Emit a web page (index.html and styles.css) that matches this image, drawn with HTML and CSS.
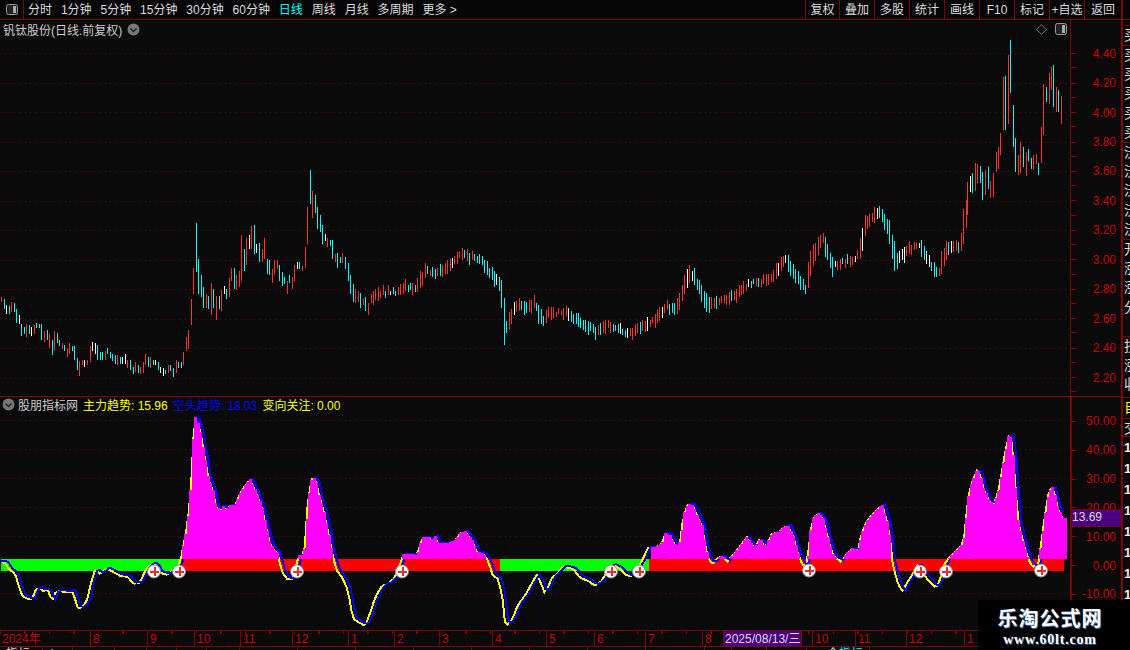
FILE: index.html
```html
<!DOCTYPE html>
<html lang="zh">
<head>
<meta charset="utf-8">
<title>钒钛股份</title>
<link rel="stylesheet" href="styles.css">
</head>
<body>
<div class="app">
  <header class="toolbar">
    <button class="layout-btn" aria-label="切换布局">
      <svg width="12" height="11" viewBox="0 0 12 11"><rect x="0.5" y="0.5" width="11" height="10" rx="2" fill="#222" stroke="#999"/><rect x="7" y="2" width="3" height="7" fill="#aaa"/></svg>
    </button>
    <nav class="periods">
      <span>分时</span><span>1分钟</span><span>5分钟</span><span>15分钟</span><span>30分钟</span><span>60分钟</span><span class="active">日线</span><span>周线</span><span>月线</span><span>多周期</span><span>更多 &gt;</span>
    </nav>
    <div class="tools">
      <span class="tool tool-first">复权</span><span class="tool">叠加</span><span class="tool">多股</span><span class="tool">统计</span><span class="tool">画线</span><span class="tool">F10</span><span class="tool">标记</span><span class="tool">+自选</span><span class="tool">返回</span><span class="tool tool-end"></span>
    </div>
  </header>

  <div class="body-row">
    <main class="charts">
      <section class="panel panel-price">
        <div class="plot">
          <svg id="price" class="plot-svg" width="1070" height="376" viewBox="0 20 1070 376"></svg>
          <div class="title-line">
            <span class="title-text">钒钛股份(日线.前复权)</span>
            <svg class="chev" width="13" height="13" viewBox="0 0 13 13"><circle cx="6.5" cy="6.5" r="6" fill="#777"/><path d="M3.5 5.5l3 3 3-3" fill="none" stroke="#222" stroke-width="1.4"/></svg>
          </div>
          <div class="corner-icons">
            <svg width="11" height="11" viewBox="0 0 11 11"><path d="M5.5 0.7l4.8 4.8-4.8 4.8-4.8-4.8z" fill="none" stroke="#777"/></svg>
            <svg width="12" height="12" viewBox="0 0 12 12"><rect x="0.5" y="0.5" width="11" height="11" rx="2" fill="#222" stroke="#999"/><rect x="7" y="2" width="3" height="8" fill="#aaa"/></svg>
          </div>
        </div>
        <div class="axis axis-price">
          <div class="mark">4.40</div><div class="mark">4.20</div><div class="mark">4.00</div><div class="mark">3.80</div><div class="mark">3.60</div><div class="mark">3.40</div><div class="mark">3.20</div><div class="mark">3.00</div><div class="mark">2.80</div><div class="mark">2.60</div><div class="mark">2.40</div><div class="mark">2.20</div>
        </div>
      </section>

      <section class="panel panel-ind">
        <div class="plot">
          <svg id="indicator" class="plot-svg" width="1070" height="233" viewBox="0 397 1070 233"></svg>
          <div class="ind-legend">
            <svg class="chev" width="13" height="13" viewBox="0 0 13 13"><circle cx="6.5" cy="6.5" r="6" fill="#777"/><path d="M3.5 5.5l3 3 3-3" fill="none" stroke="#222" stroke-width="1.4"/></svg>
            <span class="ind-name">股朋指标网</span>
            <span class="yellow">主力趋势: 15.96</span>
            <span class="blue">空头趋势: 18.03</span>
            <span class="yellow">变向关注: 0.00</span>
          </div>
        </div>
        <div class="axis axis-ind">
          <div class="mark">50.00</div><div class="mark">40.00</div><div class="mark">30.00</div><div class="mark">20.00</div><div class="mark">10.00</div><div class="mark">0.00</div><div class="mark">-10.00</div>
          <div class="value-tag">13.69</div>
        </div>
      </section>

      <div class="time-axis">
        <span>2024年</span><span>8</span><span>9</span><span>10</span><span>11</span><span>12</span><span>1</span><span>2</span><span>3</span><span>4</span><span>5</span><span>6</span><span>7</span><span>8</span><span class="date-tag">2025/08/13/三</span><span class="gap"></span><span>10</span><span>11</span><span>12</span><span>1</span>
      </div>
      <div class="tabs">
        <span>指标</span><span>(</span><span></span><span></span><span></span><span></span><span></span><span></span><span></span><span></span><span></span><span></span><span></span><span></span><span></span><span></span><span></span><span></span><span class="tab-wide">全<b class="tab-on">指标</b></span><span></span>
      </div>
    </main>

    <aside class="strip">
      <div class="strip-price">
        <div class="sgroup g1"><span>买</span></div>
        <div class="sgroup g2"><span>买</span><span>买</span><span>买</span><span>买</span><span>买</span></div>
        <div class="sgroup g2"><span>沃</span><span>沃</span><span>沃</span><span>沃</span><span>沃</span></div>
        <div class="sgroup g2"><span>开</span><span>涨</span><span>涨</span><span>分</span></div>
        <div class="sgroup g3"><span>技</span><span>涨</span><span>收</span></div>
      </div>
      <div class="strip-ind">
        <div class="sgroup g4"><span class="yellow">自</span></div>
        <div class="sgroup g5"><span>交</span></div>
        <div class="digits"><span>1</span><span>1</span><span>1</span><span>1</span><span>1</span><span>1</span><span>1</span><span>1</span></div>
      </div>
    </aside>
  </div>

  <div class="watermark">
    <div class="wm-title">乐淘公式网</div>
    <div class="wm-url">www.60lt.com</div>
  </div>
</div>
<script src="chart.js"></script>
</body>
</html>
```

FILE: styles.css
```css
* { box-sizing: border-box; }
html, body { margin: 0; padding: 0; background: #0a0a0a; }
body {
  width: 1130px;
  height: 650px;
  overflow: hidden;
  font-family: "Liberation Sans", "Noto Sans CJK SC", sans-serif;
  font-size: 12px;
  color: #ddd;
}
.app { position: relative; width: 1130px; height: 650px; display: flex; flex-direction: column; }

/* toolbar */
.toolbar {
  flex: none;
  height: 20px;
  display: flex;
  background: #050505;
  border-bottom: 1px solid #800000;
}
.layout-btn {
  width: 24px;
  padding: 0 0 0 1px;
  background: none;
  border: 0;
  border-right: 1px solid #800000;
  display: flex;
  align-items: center;
  justify-content: center;
}
.periods { display: flex; align-items: center; gap: 8.9px; padding: 1px 0 0 4px; flex: 1; line-height: 18px; }
.periods .active { color: #00ffff; }
.tools { display: flex; }
.tool {
  width: 35px;
  border-left: 1px solid #800000;
  text-align: center;
  line-height: 20px;
  white-space: nowrap;
}
.tool-first { width: 34px; }
.tool-end { width: 9px; border-left-width: 2px; }
.tools .tool:nth-last-child(2) { width: 37px; }

/* layout */
.body-row { flex: 1; display: flex; min-height: 0; }
.charts { width: 1121px; flex: none; display: flex; flex-direction: column; }
.panel { display: flex; flex: none; }
.panel-price { height: 377px; border-bottom: 1px solid #800000; }
.panel-ind { height: 233px; }
.plot { position: relative; width: 1070px; flex: none; }
.plot-svg { display: block; }
.title-line {
  position: absolute;
  left: 3px;
  top: 0;
  display: flex;
  align-items: center;
  gap: 5px;
  height: 18px;
  color: #ccc;
  white-space: nowrap;
}
.corner-icons {
  position: absolute;
  right: 3px;
  top: 3px;
  display: flex;
  align-items: center;
  gap: 8px;
}
.ind-legend {
  position: absolute;
  left: 2px;
  top: -1px;
  height: 17px;
  display: flex;
  align-items: center;
  gap: 5px;
  white-space: nowrap;
}
.ind-legend .chev { margin-right: -2px; }
.ind-name { color: #ccc; }
.yellow { color: #ffff00; }
.blue { color: #0000ff; }

/* axis */
.axis { position: relative; flex: 1; color: #c80000; text-align: right; }
.axis-price { border-left: 1px solid #800000; padding-top: 19px; }
.axis-ind { border-left: 2px solid #800000; padding-top: 10px; }
.mark { padding-right: 5px; display: flex; align-items: center; justify-content: flex-end; }
.axis-price .mark {
  height: 29.45px;
  background:
    linear-gradient(#800000, #800000) left center / 6px 1px no-repeat,
    linear-gradient(#800000, #800000) left bottom / 6px 1px no-repeat;
}
.axis-ind .mark {
  height: 28.85px;
  background: linear-gradient(#800000, #800000) left center / 5px 1px no-repeat;
}
.value-tag {
  position: absolute;
  left: 0;
  top: 112px;
  width: 49px;
  height: 18px;
  background: #4b0082;
  border-top: 1px solid #800000;
  border-bottom: 1px solid #800000;
  color: #ddd;
  text-align: left;
  line-height: 15px;
}

/* time axis */
.time-axis {
  flex: none;
  height: 17px;
  width: 1121px;
  display: grid;
  grid-template-columns: 91px 57px 47px 46px 52px 56px 46px 45px 53px 54px 48px 51px 57px 21px 78px 11px 43px 51px 58px 1fr;
  border-top: 1px solid #800000;
  border-bottom: 1px solid #800000;
  color: #c80000;
  line-height: 16px;
  background:
    repeating-linear-gradient(90deg, #800000 0 1px, transparent 1px 24.5px) left top / 100% 3px no-repeat;
}
.time-axis span { border-right: 1px solid #800000; padding-left: 2px; white-space: nowrap; overflow: hidden; }
.time-axis .date-tag { background: #4b0082; color: #ddd; padding-left: 1px; }
.time-axis .gap { padding: 0; }

/* clipped bottom tabs */
.tabs {
  flex: none;
  height: 3px;
  overflow: hidden;
  display: grid;
  grid-template-columns: 43px 30px 42px 32px 30px 30px 33px 58px 58px 58px 58px 58px 58px 58px 59px 27px 35px 40px 63px 1fr;
  line-height: 15px;
  color: #ddd;
}
.tabs span { border-right: 1px solid #800000; padding-left: 6px; white-space: nowrap; }
.tabs .tab-wide { padding-left: 20px; }
.tabs .tab-on { color: #00ffff; font-weight: 400; }

/* clipped right strip */
.strip {
  width: 9px;
  flex: none;
  border-left: 2px solid #800000;
  overflow: hidden;
  color: #ddd;
}
.strip-price { height: 377px; padding-top: 5px; }
.sgroup { border-top: 1px solid #800000; padding-left: 1px; white-space: nowrap; }
.sgroup span { display: block; font-size: 14px; line-height: 19.2px; height: 19.2px; }
.g1 { height: 20px; }
.g2 { height: 97px; }
.g3 { height: 61px; }
.g4 { height: 21px; }
.g5 { height: 19px; border-bottom: 1px solid #800000; }
.digits { display: flex; flex-direction: column; padding-left: 1px; }
.digits span { height: 21px; line-height: 21px; font-size: 13px; font-weight: 700; color: #eee; }

/* watermark */
.watermark {
  position: absolute;
  left: 978px;
  top: 600px;
  width: 152px;
  height: 50px;
  background: #000;
  color: #fff;
  text-align: center;
  padding-right: 8px;
}
.wm-title {
  font-size: 20px;
  font-weight: 700;
  line-height: 28px;
  letter-spacing: 1px;
  padding-top: 5px;
  height: 32px;
  text-shadow: 1px 1px 0 #4a6fb0;
}
.wm-url {
  font-family: "Liberation Serif", serif;
  font-weight: 700;
  font-size: 14px;
  line-height: 16px;
  letter-spacing: 0.8px;
  text-shadow: 1px 1px 0 #2f4f90;
}
```

FILE: chart.js
```js
(function () {
  var NS = 'http://www.w3.org/2000/svg';
  var COLORS = { r: '#ff3232', c: '#00ffff', w: '#ffffff' };
  var STEP = 2.47;

  function add(parent, name, attrs) {
    var el = document.createElementNS(NS, name);
    for (var k in attrs) el.setAttribute(k, attrs[k]);
    parent.appendChild(el);
    return el;
  }
  function grid(svg, ys) {
    ys.forEach(function (y) {
      add(svg, 'line', { x1: 0, x2: 1070, y1: y + 0.5, y2: y + 0.5, stroke: '#640000', 'stroke-dasharray': '1 4', 'shape-rendering': 'crispEdges' });
    });
  }
  function interp(pts, x) {
    if (x <= pts[0][0]) return pts[0][1];
    for (var i = 1; i < pts.length; i++) {
      if (x <= pts[i][0]) {
        var a = pts[i - 1], b = pts[i];
        return a[1] + (b[1] - a[1]) * (x - a[0]) / (b[0] - a[0]);
      }
    }
    return pts[pts.length - 1][1];
  }

  /* ---------- price panel ---------- */
  var head = 'r1,297,302 c4,299,309 w6,305,314 c9,306,314 r11,302,312 c14,303,312 c16,309,323 w19,315,324 c21,324,336 c24,327,334 r26,324,337 c29,325,334 w31,327,336 r34,325,334 c36,323,328 c39,324,328 c41,324,340 r44,331,342 c47,330,340 r49,334,348 c52,340,355 r54,331,351 c57,333,343 c59,340,346 r62,343,349 c64,345,351 r67,348,357 r69,343,354 c72,346,351 c74,346,360 c77,358,370 r79,361,376 r82,360,365 w84,360,367 r87,360,365 r90,346,362 w92,342,351 w95,343,354 c97,345,360 c100,352,360 c102,352,360 r105,351,360 c107,348,354 c110,352,358 c112,354,361 c115,355,364 r117,355,365 c120,357,364 w122,357,364 w125,354,364 r127,360,368 c130,360,370 c133,367,374 r135,362,372 c138,365,373 r140,367,374 r143,362,373 r145,354,365 c148,357,367 r150,357,368 c153,360,365 w155,360,365 c158,362,370 w160,367,373 w163,368,376 c165,370,374 r168,365,373 c170,365,371 c173,368,377 r176,360,373 c178,362,368 c181,362,368 r183,352,365 r186,337,351 r188,330,349 r191,299,325 r193,268,294 c196,223,272 c198,259,294 c201,275,297 c203,287,308 r206,294,308 c208,296,309 r211,283,315 c213,289,308 r216,296,320 c219,296,309 r221,290,311 w224,286,294 c226,289,299 r229,278,297 r231,268,281 c234,268,289 r236,275,290 r239,271,287 r241,235,281 c244,249,271 r246,238,265 w249,235,249 r251,226,249 c254,225,254 w256,244,253 c259,243,262 r262,249,262 r264,238,259 c267,259,274 c269,260,275 r272,269,283 r274,260,274 r277,260,269 c279,265,281 c282,272,286 c284,277,284 r287,281,294 c289,275,283 r292,277,289 r294,265,281 w297,262,269 c299,262,269 r302,266,271 r305,247,268 r307,207,244 c310,170,204 r312,191,218 c315,195,213 c317,207,229 c320,215,232 c322,225,244 w325,234,241 r327,238,247 c330,240,246 c332,240,259 r335,254,262 c337,253,268 c340,257,263 r342,253,263 c345,257,269 c348,263,281 c350,275,294 c353,284,302 r355,289,303 r358,291,302 c360,293,308 r363,299,305 c365,297,311 r368,303,315';
  var tail = 'r967,182,215 w970,176,192 c972,173,193 r975,163,191 r977,164,183 c980,166,183 c982,172,200 r985,170,195 c988,167,189 r990,181,198 r993,173,197 r996,152,172 r998,147,169 r1000,133,155 r1003,77,130 c1005,76,130 r1008,55,124 c1010,40,93 c1013,105,147 c1015,138,172 r1018,155,175 r1020,142,173 c1023,147,167 r1026,152,176 c1028,149,161 c1031,158,169 r1033,155,170 r1036,154,164 c1038,163,175 r1041,127,163 r1043,84,135 c1046,87,102 r1049,73,104 r1051,67,90 c1053,65,107 r1056,87,112 c1058,90,112 r1061,96,124';

  var mid = [[370,300],[380,292],[395,293],[405,285],[415,290],[425,272],[440,272],[450,262],[462,255],[475,258],[485,265],[497,282],[501,290],[503,320],[507,326],[512,312],[518,302],[525,308],[535,302],[542,322],[550,312],[565,312],[580,322],[595,332],[610,325],[628,335],[640,328],[655,320],[667,305],[675,312],[685,285],[690,272],[698,285],[708,305],[720,302],[735,295],[745,285],[760,282],[770,278],[785,258],[795,275],[805,290],[812,255],[822,238],[832,265],[845,262],[858,255],[865,225],[878,210],[888,228],[895,262],[905,252],[918,245],[928,262],[938,272],[945,250],[960,245],[965,215]];

  var seed = 20250813;
  function rnd() {
    seed = (seed * 1664525 + 1013904223) % 4294967296;
    return seed / 4294967296;
  }
  function parse(s) {
    return s.split(' ').map(function (t) {
      var p = t.slice(1).split(',').map(Number);
      return { c: t.charAt(0), x: p[0], t: p[1], b: p[2] };
    });
  }
  function middleBars() {
    var bars = [];
    for (var x = 370.5; x < 966; x += STEP) {
      var y = interp(mid, x), prev = interp(mid, x - STEP);
      var slope = Math.abs(y - prev);
      var half = 2 + rnd() * 4 + slope * 0.8;
      var wob = (rnd() - 0.5) * 5;
      var up = (y - prev) + (rnd() - 0.5) * 3.2 < 0;
      var r = rnd();
      bars.push({ c: r < 0.08 ? 'w' : up ? 'r' : 'c', x: Math.round(x), t: Math.round(y + wob - half), b: Math.round(y + wob + half) });
    }
    return bars;
  }

  var price = document.getElementById('price');
  grid(price, [53, 83, 112, 142, 171, 201, 230, 260, 289, 319, 348, 378]);
  parse(head).concat(middleBars(), parse(tail)).forEach(function (b) {
    add(price, 'rect', { x: b.x, y: b.t, width: 1, height: b.b - b.t, fill: COLORS[b.c], 'shape-rendering': 'crispEdges' });
  });

  /* ---------- indicator panel ---------- */
  var line = [[0,560],[5,562],[10,570],[15,572],[18,583],[22,595],[27,598],[32,599],[35,590],[39,587],[43,590],[48,589],[52,601],[55,592],[60,590],[67,592],[72,590],[75,598],[78,608],[83,606],[87,600],[91,582],[95,569],[100,573],[107,568],[113,571],[120,575],[128,576],[133,583],[140,582],[145,570],[150,564],[155,563],[160,572],[167,574],[173,570],[180,563],[183,547],[186,532],[189,510],[192,472],[193,440],[195,416],[198,423],[202,438],[203,447],[205,457],[208,477],[213,490],[216,507],[220,510],[223,506],[226,510],[230,505],[235,505],[240,493],[245,485],[250,479],[253,485],[258,497],[262,507],[269,540],[273,548],[278,553],[280,563],[283,573],[288,579],[293,578],[297,563],[298,555],[303,555],[306,540],[307,510],[310,487],[312,478],[316,478],[318,492],[323,507],[330,540],[333,557],[337,570],[343,578],[348,590],[353,618],[358,621],[365,625],[370,613],[375,597],[382,585],[388,583],[395,577],[402,558],[403,554],[410,554],[417,555],[422,537],[428,537],[432,540],[435,536],[438,543],[447,543],[455,540],[460,533],[465,531],[472,540],[477,552],[483,553],[488,560],[493,575],[498,578],[502,593],[505,622],[508,624],[513,617],[518,604],[525,595],[532,582],[537,574],[542,585],[545,593],[552,577],[557,573],[563,566],[573,568],[580,577],[588,580],[595,585],[602,580],[607,570],[612,564],[620,568],[627,575],[633,575],[642,560],[648,547],[655,547],[662,543],[665,533],[670,535],[675,545],[679,545],[682,532],[683,517],[688,503],[693,505],[698,517],[702,525],[705,543],[708,558],[713,563],[718,557],[723,556],[727,561],[735,552],[742,543],[747,536],[750,542],[755,547],[760,538],[765,547],[772,533],[778,532],[783,527],[788,525],[793,535],[797,550],[802,563],[805,567],[808,557],[810,533],[813,518],[818,513],[823,518],[828,538],[833,555],[841,561],[847,553],[852,548],[858,550],[861,535],[867,520],[873,513],[882,504],[887,520],[890,537],[892,560],[897,580],[902,591],[907,582],[913,573],[918,563],[927,578],[935,586],[938,585],[945,562],[953,553],[962,544],[965,533],[967,507],[970,487],[977,469],[980,473],[983,487],[988,498],[993,505],[998,493],[1002,470],[1005,453],[1008,436],[1011,437],[1013,453],[1015,480],[1018,520],[1022,537],[1027,555],[1032,566],[1038,565],[1042,537],[1045,515],[1048,495],[1052,485],[1055,495],[1058,508],[1063,518]];

  var ind = document.getElementById('indicator');
  grid(ind, [420, 449, 478, 507, 536, 565, 593]);

  var bands = [[1, 181, '#00ff00'], [181, 500, '#ff0000'], [500, 649, '#00ff00'], [649, 1064, '#ff0000']];
  bands.forEach(function (b) {
    add(ind, 'rect', { x: b[0], y: 559, width: b[1] - b[0], height: 12, fill: b[2], 'shape-rendering': 'crispEdges' });
  });

  function polyline(fn, color) {
    var pts = [];
    for (var x = 1; x <= 1064; x += STEP) pts.push(x.toFixed(1) + ',' + fn(x).toFixed(1));
    add(ind, 'polyline', { points: pts.join(' '), fill: 'none', stroke: color, 'stroke-width': 2, 'shape-rendering': 'crispEdges' });
  }
  polyline(function (x) { return interp(line, x) + 0.8; }, '#ffff00');
  polyline(function (x) { return x < 4 ? interp(line, x) : interp(line, x - 3) - 0.4; }, '#0000ff');

  for (var x = 182; x < 1064; x += STEP) {
    var inRed = x < 499 || x >= 649;
    var top = Math.round(interp(line, x + 1.2));
    if (inRed && top < 559) {
      add(ind, 'rect', { x: Math.round(x), y: top, width: 3, height: 559 - top, fill: '#ff00ff', 'shape-rendering': 'crispEdges' });
    }
  }

  [[154,571],[179,571],[297,571],[402,571],[611,571],[639,571],[809,570],[920,571],[946,571],[1041,570]].forEach(function (p) {
    add(ind, 'circle', { cx: p[0], cy: p[1] + 0.5, r: 6.5, fill: '#fff', stroke: '#8a8a8a', 'stroke-width': 1 });
    add(ind, 'rect', { x: p[0] - 4, y: p[1] - 0.5, width: 9, height: 2, fill: '#f42a2a', 'shape-rendering': 'crispEdges' });
    add(ind, 'rect', { x: p[0] - 0.5, y: p[1] - 4, width: 2, height: 9, fill: '#f42a2a', 'shape-rendering': 'crispEdges' });
  });
})();
```
